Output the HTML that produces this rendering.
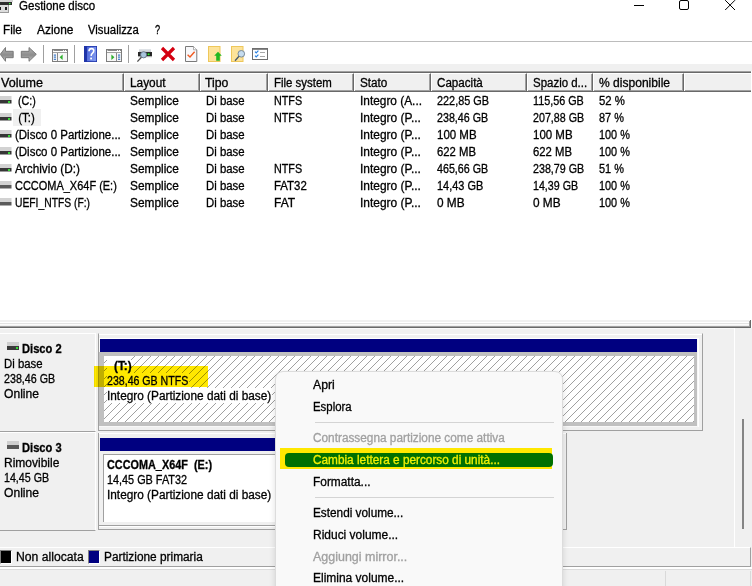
<!DOCTYPE html>
<html><head><meta charset="utf-8">
<style>
html,body{margin:0;padding:0;}
body{width:752px;height:586px;overflow:hidden;position:relative;background:#fff;font-family:"Liberation Sans",sans-serif;}
div{position:absolute;box-sizing:border-box;}
.t{white-space:pre;line-height:1;transform-origin:0 0;-webkit-text-stroke:0.3px currentColor;}
.hl{left:0;width:752px;height:1px;}
.hc{top:73px;height:19px;box-shadow:inset -1px -1px 0 #a0a0a0;background:#f0f0f0;border-top:1px solid #fff;border-left:1px solid #fff;border-bottom:1px solid #696969;border-right:1px solid #696969;}
.sep{width:1px;height:18px;top:45px;background:#a0a0a0;}
svg{position:absolute;overflow:visible;}
</style></head><body>

<!-- title bar -->
<svg style="left:0;top:0" width="14" height="14" viewBox="0 0 14 14">
  <rect x="0" y="0" width="13" height="2" fill="#d4d4d4"/>
  <rect x="0" y="2" width="12" height="3" fill="#2e2e2e"/>
  <rect x="9" y="3" width="1.5" height="1.2" fill="#3cff3c"/>
  <rect x="0" y="5" width="9" height="8" fill="#dcdcdc"/>
  <rect x="8" y="5" width="1" height="8" fill="#9a9a9a"/>
  <rect x="0" y="12" width="9" height="1" fill="#9a9a9a"/>
  <rect x="0" y="7" width="1" height="3" fill="#222"/>
  <rect x="5" y="7" width="2" height="3" fill="#222"/>
</svg>
<div style="left:634px;top:5px;width:10px;height:1px;background:#000"></div>
<div style="left:679px;top:0px;width:10px;height:10px;border:1px solid #000;border-radius:2px"></div>
<svg style="left:725px;top:0" width="11" height="11" viewBox="0 0 11 11"><path d="M0.2 0.2 L10 10 M10 0.2 L0.2 10" stroke="#000" stroke-width="1"/></svg>

<!-- menu line -->
<div class="hl" style="top:41px;background:#bcbcbc"></div>

<!-- toolbar -->
<div class="sep" style="left:43px"></div>
<div class="sep" style="left:74px"></div>
<div class="sep" style="left:128px"></div>
<!-- back/forward arrows -->
<svg style="left:0;top:47px" width="40" height="15" viewBox="0 0 40 15">
  <defs><linearGradient id="ga" x1="0" y1="0" x2="0" y2="1"><stop offset="0" stop-color="#b4b4b4"/><stop offset="0.55" stop-color="#8c8c8c"/><stop offset="1" stop-color="#c4c4c4"/></linearGradient></defs>
  <path d="M0.3 7.3 L5.5 0.5 L5.5 4.3 L13.2 4.3 L13.2 10.7 L5.5 10.7 L5.5 14.3 Z" fill="url(#ga)" stroke="#707070" stroke-width="0.9"/>
  <path d="M21.3 4.3 L29 4.3 L29 0.5 L36.3 7.3 L29 14.3 L29 10.7 L21.3 10.7 Z" fill="url(#ga)" stroke="#707070" stroke-width="0.9"/>
</svg>
<!-- show/hide tree -->
<svg style="left:52px;top:49px" width="16" height="13" viewBox="0 0 16 13">
  <rect x="0.5" y="0.5" width="15" height="12" fill="#f6f6f6" stroke="#7d7d7d"/>
  <rect x="1" y="1" width="14" height="2" fill="#fff"/>
  <line x1="1.5" y1="1.5" x2="11" y2="1.5" stroke="#8a8a8a"/>
  <rect x="12" y="1" width="1" height="1" fill="#8a8a8a"/><rect x="14" y="1" width="1" height="1" fill="#8a8a8a"/>
  <line x1="1" y1="3.5" x2="15" y2="3.5" stroke="#a0a0a0"/>
  <line x1="5.5" y1="4" x2="5.5" y2="12" stroke="#8a8a8a"/>
  <rect x="1.8" y="5.5" width="2.2" height="1.2" fill="#3a78c8"/><rect x="1.8" y="7.5" width="2.2" height="1.2" fill="#3a78c8"/><rect x="1.8" y="9.7" width="2.2" height="1.2" fill="#3a78c8"/>
  <path d="M10.6 5.5 L7.6 8.3 L10.6 11 Z" fill="#2fb02f"/>
</svg>
<!-- help -->
<svg style="left:84px;top:46px" width="13" height="16" viewBox="0 0 13 16">
  <defs><linearGradient id="gh" x1="0" y1="0" x2="1" y2="0.3"><stop offset="0" stop-color="#4a64d8"/><stop offset="1" stop-color="#7d96ee"/></linearGradient></defs>
  <rect x="0" y="0" width="13" height="16" fill="#1f34a8"/>
  <rect x="3" y="0.8" width="9.2" height="14.4" fill="url(#gh)"/>
  <path d="M5 5.2 Q5 2.6 7.4 2.6 Q9.8 2.6 9.8 4.8 Q9.8 6.3 8.3 7.3 Q7.3 8 7.1 9.8" fill="none" stroke="#fff" stroke-width="1.6"/>
  <rect x="6.2" y="11.6" width="1.8" height="1.8" fill="#fff"/>
</svg>
<!-- show/hide action pane -->
<svg style="left:106px;top:49px" width="16" height="13" viewBox="0 0 16 13">
  <rect x="0.5" y="0.5" width="15" height="12" fill="#f6f6f6" stroke="#7d7d7d"/>
  <rect x="1" y="1" width="14" height="2" fill="#fff"/>
  <line x1="1.5" y1="1.5" x2="11" y2="1.5" stroke="#8a8a8a"/>
  <rect x="12" y="1" width="1" height="1" fill="#8a8a8a"/><rect x="14" y="1" width="1" height="1" fill="#8a8a8a"/>
  <line x1="1" y1="3.5" x2="15" y2="3.5" stroke="#a0a0a0"/>
  <line x1="10.5" y1="4" x2="10.5" y2="12" stroke="#8a8a8a"/>
  <rect x="12" y="5.5" width="2.2" height="1.2" fill="#3a78c8"/><rect x="12" y="7.5" width="2.2" height="1.2" fill="#3a78c8"/><rect x="12" y="9.7" width="2.2" height="1.2" fill="#3a78c8"/>
  <path d="M5.4 5.5 L8.4 8.3 L5.4 11 Z" fill="#2fb02f"/>
</svg>
<!-- drive w magnifier -->
<svg style="left:134px;top:44px" width="20" height="20" viewBox="0 0 20 20">
  <defs><linearGradient id="gd" x1="0" y1="0" x2="0" y2="1"><stop offset="0" stop-color="#e4e8ec"/><stop offset="1" stop-color="#c4c8cc"/></linearGradient></defs>
  <rect x="5" y="5" width="12" height="3" fill="url(#gd)"/>
  <rect x="4" y="8" width="14" height="4.5" fill="#2a2a2a"/>
  <rect x="4" y="12.5" width="14" height="0.8" fill="#c8c8c8"/>
  <rect x="12.8" y="9" width="3.6" height="2.6" fill="#111"/>
  <rect x="13.6" y="9.4" width="2" height="1.8" fill="#30f030"/>
  <circle cx="9.6" cy="10.8" r="3.1" fill="#a8c4dc" stroke="#5a6a7a" stroke-width="0.8"/>
  <line x1="7.4" y1="13.2" x2="3.4" y2="17.6" stroke="#505050" stroke-width="1.3"/>
</svg>
<!-- red X -->
<svg style="left:160px;top:46px" width="16" height="16" viewBox="0 0 16 16">
  <path d="M2 2 L14 14 M14 2 L2 14" stroke="#d40010" stroke-width="3.2"/>
</svg>
<!-- doc check -->
<svg style="left:185px;top:46px" width="13" height="16" viewBox="0 0 13 16">
  <path d="M0.5 0.5 L8.5 0.5 L11.8 3.8 L11.8 15.5 L0.5 15.5 Z" fill="#f8f8fa" stroke="#7a7a7a"/>
  <path d="M8.5 0.5 L8.5 3.8 L11.8 3.8" fill="#fff" stroke="#9a9a9a" stroke-width="0.8"/>
  <path d="M2.6 8.8 L5 11 L9.6 5.8" fill="none" stroke="#f05a20" stroke-width="1.4"/>
</svg>
<!-- folder up -->
<svg style="left:208px;top:46px" width="14" height="16" viewBox="0 0 14 16">
  <rect x="0.5" y="0.5" width="11.5" height="15" fill="#fde39a" stroke="#eec75a"/>
  <path d="M10 5.8 L13.8 9.8 L11.8 9.8 L11.8 14.8 L8.2 14.8 L8.2 9.8 L6.2 9.8 Z" fill="#22b822"/>
</svg>
<!-- folder search -->
<svg style="left:231px;top:46px" width="15" height="16" viewBox="0 0 15 16">
  <rect x="0.5" y="0.5" width="11.5" height="15" fill="#fde39a" stroke="#eec75a"/>
  <circle cx="10.3" cy="7.8" r="3.3" fill="#c6dcee" stroke="#7a8a98"/>
  <line x1="8" y1="10.3" x2="4" y2="14.8" stroke="#4a5a6a" stroke-width="1.3"/>
</svg>
<!-- checklist window -->
<svg style="left:252px;top:48px" width="16" height="12" viewBox="0 0 16 12">
  <rect x="0.5" y="0.5" width="15" height="11" fill="#fff" stroke="#6e6e6e"/>
  <rect x="1" y="1" width="14" height="1" fill="#8a8a8a"/>
  <path d="M3 3.6 L4.2 4.8 L6.4 2.6 M3 7.6 L4.2 8.8 L6.4 6.6" fill="none" stroke="#2a80e0" stroke-width="1.2"/>
  <line x1="8" y1="4.5" x2="13" y2="4.5" stroke="#a8a8a8"/>
  <line x1="8" y1="8.5" x2="13" y2="8.5" stroke="#a8a8a8"/>
</svg>

<!-- gray strip -->
<div style="left:0;top:64px;width:752px;height:7px;background:#f0f0f0"></div>
<div class="hl" style="top:71px;width:751px;background:#a0a0a0"></div>
<div class="hl" style="top:72px;width:751px;background:#696969"></div>

<!-- header cells -->
<div class="hc" style="left:-6px;width:130px"></div>
<div class="hc" style="left:124px;width:76px"></div>
<div class="hc" style="left:200px;width:68px"></div>
<div class="hc" style="left:268px;width:86px"></div>
<div class="hc" style="left:354px;width:77px"></div>
<div class="hc" style="left:431px;width:96px"></div>
<div class="hc" style="left:527px;width:66px"></div>
<div class="hc" style="left:593px;width:91px"></div>
<div class="hc" style="left:684px;width:67px;border-right:none;box-shadow:inset 0 -1px 0 #a0a0a0"></div>
<div class="hl" style="top:91px;width:751px;background:#696969"></div>
<div style="left:751px;top:71px;width:1px;height:257px;background:#fff"></div>

<!-- row icons -->
<svg style="left:0;top:96px" width="12" height="8" viewBox="0 0 12 8"><rect x="0" y="0" width="11.5" height="4" fill="#d2d2d2"/><rect x="0" y="4" width="11.5" height="3.5" fill="#363636"/><rect x="8" y="5" width="2" height="2" fill="#3ad83a"/></svg>
<svg style="left:0;top:113px" width="12" height="8" viewBox="0 0 12 8"><rect x="0" y="0" width="11.5" height="4" fill="#d2d2d2"/><rect x="0" y="4" width="11.5" height="3.5" fill="#363636"/><rect x="8" y="5" width="2" height="2" fill="#3ad83a"/></svg>
<svg style="left:0;top:130px" width="12" height="8" viewBox="0 0 12 8"><rect x="0" y="0" width="11.5" height="4" fill="#d2d2d2"/><rect x="0" y="4" width="11.5" height="3.5" fill="#363636"/><rect x="8" y="5" width="2" height="2" fill="#3ad83a"/></svg>
<svg style="left:0;top:147px" width="12" height="8" viewBox="0 0 12 8"><rect x="0" y="0" width="11.5" height="4" fill="#d2d2d2"/><rect x="0" y="4" width="11.5" height="3.5" fill="#363636"/><rect x="8" y="5" width="2" height="2" fill="#3ad83a"/></svg>
<svg style="left:0;top:164px" width="12" height="8" viewBox="0 0 12 8"><rect x="0" y="0" width="11.5" height="4" fill="#d2d2d2"/><rect x="0" y="4" width="11.5" height="3.5" fill="#363636"/><rect x="8" y="5" width="2" height="2" fill="#3ad83a"/></svg>
<svg style="left:0;top:181px" width="12" height="8" viewBox="0 0 12 8"><rect x="0" y="0" width="11.5" height="4" fill="#d2d2d2"/><rect x="0" y="4" width="11.5" height="3.5" fill="#5a5a5a"/></svg>
<svg style="left:0;top:198px" width="12" height="8" viewBox="0 0 12 8"><rect x="0" y="0" width="11.5" height="4" fill="#d2d2d2"/><rect x="0" y="4" width="11.5" height="3.5" fill="#5a5a5a"/></svg>
<div style="left:13px;top:109px;width:28px;height:17px;background:#f0f0f0"></div>

<!-- list bottom edge -->
<div style="left:0;top:320px;width:750px;height:8px;background:#f0f0f0"></div>
<div class="hl" style="top:322px;width:749px;background:#fff"></div>
<div class="hl" style="top:323px;width:749px;background:#e3e3e3"></div>
<div class="hl" style="top:324px;width:749px;background:#fbfbfb"></div>
<div class="hl" style="top:326px;width:750px;background:#a0a0a0"></div>
<div class="hl" style="top:327px;width:751px;background:#696969"></div>
<div style="left:749px;top:321px;width:1px;height:6px;background:#a0a0a0"></div>
<div style="left:750px;top:320px;width:1px;height:8px;background:#696969"></div>

<!-- lower pane -->
<div style="left:0;top:328px;width:752px;height:258px;background:#f0f0f0"></div>
<div class="hl" style="top:328px;width:734px;background:#fafafa"></div>

<!-- scrollbar -->
<div style="left:734px;top:328px;width:1px;height:219px;background:#fff"></div>
<div style="left:742px;top:419px;width:2px;height:110px;background:#858585"></div>

<!-- Disco 2 -->
<div style="left:0;top:333px;width:96px;height:99px;border-top:1px solid #fff;border-right:1px solid #fff;border-bottom:1px solid #a0a0a0"></div>
<div style="left:98px;top:333px;width:605px;height:98px;border-top:1px solid #f0f0f0;border-left:1px solid #a0a0a0;border-right:1px solid #a0a0a0;border-bottom:1px solid #a0a0a0"></div>
<div class="hl" style="left:99px;top:334px;width:603px;background:#fff"></div>
<div style="left:99px;top:338px;width:600px;height:89px;background:#f8f8f8;border-top:1px solid #fff;border-right:1px solid #fff"></div>
<div style="left:100px;top:339px;width:597px;height:13px;background:#000080"></div>
<div style="left:99px;top:352px;width:598px;height:74px;background:#c0c0c0"></div>
<svg style="left:104px;top:356px" width="590" height="66" shape-rendering="crispEdges">
  <defs><pattern id="hatch" width="8" height="8" patternUnits="userSpaceOnUse" x="0" y="0">
    <rect width="8" height="8" fill="#fff"/>
    <rect x="0" y="6" width="1" height="1" fill="#a0a0a0"/><rect x="1" y="5" width="1" height="1" fill="#a0a0a0"/>
    <rect x="2" y="4" width="1" height="1" fill="#a0a0a0"/><rect x="3" y="3" width="1" height="1" fill="#a0a0a0"/>
    <rect x="4" y="2" width="1" height="1" fill="#a0a0a0"/><rect x="5" y="1" width="1" height="1" fill="#a0a0a0"/>
    <rect x="6" y="0" width="1" height="1" fill="#a0a0a0"/><rect x="7" y="7" width="1" height="1" fill="#a0a0a0"/>
  </pattern></defs>
  <rect width="590" height="66" fill="url(#hatch)"/>
</svg>

<div style="left:107px;top:356px;width:24px;height:17px;background:#fff"></div>
<div style="left:107px;top:373px;width:82px;height:15px;background:#fff"></div>
<div style="left:107px;top:388px;width:165px;height:15px;background:#fff"></div>

<!-- Disco 3 -->
<div style="left:0;top:432px;width:96px;height:99px;border-top:1px solid #fff;border-right:1px solid #fff;border-bottom:1px solid #a0a0a0"></div>
<div style="left:98px;top:433px;width:469px;height:97px;border-left:1px solid #a0a0a0;border-right:1px solid #a0a0a0;border-bottom:1px solid #a0a0a0"></div>
<div class="hl" style="left:99px;top:433px;width:467px;background:#fff"></div>
<div style="left:100px;top:438px;width:462px;height:13px;background:#000080"></div>
<div style="left:103px;top:454px;width:458px;height:68px;background:#fff;border-left:1px solid #a0a0a0;border-top:1px solid #a0a0a0"></div>
<div class="hl" style="left:99px;top:525px;width:463px;background:#a0a0a0"></div>
<div class="hl" style="left:99px;top:526px;width:463px;background:#fff"></div>

<!-- disk icons -->
<svg style="left:7px;top:342px" width="13" height="8" viewBox="0 0 13 8">
  <rect x="0" y="0" width="12" height="4" fill="#cfcfcf"/><rect x="0" y="4" width="12" height="4" fill="#3a3a3a"/><rect x="9" y="5" width="2" height="2" fill="#33dd33"/>
</svg>
<svg style="left:7px;top:441px" width="13" height="8" viewBox="0 0 13 8">
  <rect x="0" y="0" width="12" height="4" fill="#cfcfcf"/><rect x="0" y="4" width="12" height="4" fill="#575757"/>
</svg>

<!-- legend -->
<div style="left:-2px;top:547px;width:753px;height:20px;border-top:1px solid #fff;border-bottom:1px solid #a0a0a0;border-right:1px solid #a0a0a0"></div>
<div style="left:0;top:550px;width:12px;height:14px;background:#000;border-top:1px solid #808080;border-left:1px solid #808080;border-right:1px solid #fff;border-bottom:1px solid #fff"></div>
<div style="left:88px;top:550px;width:12px;height:14px;background:#000080;border-top:1px solid #808080;border-left:1px solid #808080;border-right:1px solid #fff;border-bottom:1px solid #fff"></div>

<!-- status bar -->
<div class="hl" style="top:567px;height:2px;background:#fff"></div>
<div class="hl" style="top:569px;background:#dcdcdc"></div>
<div style="left:665px;top:571px;width:1px;height:15px;background:#d9d9d9"></div>
<div style="left:750px;top:571px;width:1px;height:15px;background:#d9d9d9"></div>

<div class="t" style="left:18.50px;top:0.34px;font-size:12px;transform:scaleX(0.9611);color:#000;">Gestione disco</div>
<div class="t" style="left:2.90px;top:24.34px;font-size:12px;transform:scaleX(0.9771);color:#000;">File</div>
<div class="t" style="left:36.80px;top:24.34px;font-size:12px;transform:scaleX(0.9916);color:#000;">Azione</div>
<div class="t" style="left:88.30px;top:24.34px;font-size:12px;transform:scaleX(0.9440);color:#000;">Visualizza</div>
<div class="t" style="left:155.30px;top:24.34px;font-size:12px;transform:scaleX(0.7716);color:#000;">?</div>
<div class="t" style="left:0.70px;top:77.04px;font-size:12px;transform:scaleX(1.0467);color:#000;">Volume</div>
<div class="t" style="left:129.80px;top:77.04px;font-size:12px;transform:scaleX(0.9851);color:#000;">Layout</div>
<div class="t" style="left:205.30px;top:77.04px;font-size:12px;transform:scaleX(1.0216);color:#000;">Tipo</div>
<div class="t" style="left:273.70px;top:77.04px;font-size:12px;transform:scaleX(0.9533);color:#000;">File system</div>
<div class="t" style="left:359.50px;top:77.04px;font-size:12px;transform:scaleX(0.9775);color:#000;">Stato</div>
<div class="t" style="left:436.80px;top:77.04px;font-size:12px;transform:scaleX(0.9673);color:#000;">Capacità</div>
<div class="t" style="left:532.50px;top:77.04px;font-size:12px;transform:scaleX(0.9555);color:#000;">Spazio d...</div>
<div class="t" style="left:599.30px;top:77.04px;font-size:12px;transform:scaleX(1.0044);color:#000;">% disponibile</div>
<div class="t" style="left:14.80px;top:95.34px;font-size:12px;transform:scaleX(0.8899);color:#000;"> (C:)</div>
<div class="t" style="left:129.80px;top:95.34px;font-size:12px;transform:scaleX(0.9887);color:#000;">Semplice</div>
<div class="t" style="left:205.80px;top:95.34px;font-size:12px;transform:scaleX(0.9462);color:#000;">Di base</div>
<div class="t" style="left:274.30px;top:95.34px;font-size:12px;transform:scaleX(0.8965);color:#000;">NTFS</div>
<div class="t" style="left:360.30px;top:95.34px;font-size:12px;transform:scaleX(0.9888);color:#000;">Integro (A...</div>
<div class="t" style="left:437.00px;top:95.34px;font-size:12px;transform:scaleX(0.9063);color:#000;">222,85 GB</div>
<div class="t" style="left:532.90px;top:95.34px;font-size:12px;transform:scaleX(0.8994);color:#000;">115,56 GB</div>
<div class="t" style="left:599.30px;top:95.34px;font-size:12px;transform:scaleX(0.9467);color:#000;">52 %</div>
<div class="t" style="left:14.80px;top:112.34px;font-size:12px;transform:scaleX(0.9538);color:#000;"> (T:)</div>
<div class="t" style="left:129.80px;top:112.34px;font-size:12px;transform:scaleX(0.9887);color:#000;">Semplice</div>
<div class="t" style="left:205.80px;top:112.34px;font-size:12px;transform:scaleX(0.9462);color:#000;">Di base</div>
<div class="t" style="left:274.30px;top:112.34px;font-size:12px;transform:scaleX(0.8965);color:#000;">NTFS</div>
<div class="t" style="left:360.30px;top:112.34px;font-size:12px;transform:scaleX(0.9966);color:#000;">Integro (P...</div>
<div class="t" style="left:437.00px;top:112.34px;font-size:12px;transform:scaleX(0.8908);color:#000;">238,46 GB</div>
<div class="t" style="left:532.90px;top:112.34px;font-size:12px;transform:scaleX(0.8908);color:#000;">207,88 GB</div>
<div class="t" style="left:599.30px;top:112.34px;font-size:12px;transform:scaleX(0.9097);color:#000;">87 %</div>
<div class="t" style="left:14.80px;top:129.34px;font-size:12px;transform:scaleX(0.9556);color:#000;">(Disco 0 Partizione...</div>
<div class="t" style="left:129.80px;top:129.34px;font-size:12px;transform:scaleX(0.9887);color:#000;">Semplice</div>
<div class="t" style="left:205.80px;top:129.34px;font-size:12px;transform:scaleX(0.9462);color:#000;">Di base</div>
<div class="t" style="left:360.30px;top:129.34px;font-size:12px;transform:scaleX(0.9966);color:#000;">Integro (P...</div>
<div class="t" style="left:437.00px;top:129.34px;font-size:12px;transform:scaleX(0.9575);color:#000;">100 MB</div>
<div class="t" style="left:532.90px;top:129.34px;font-size:12px;transform:scaleX(0.9575);color:#000;">100 MB</div>
<div class="t" style="left:599.30px;top:129.34px;font-size:12px;transform:scaleX(0.9076);color:#000;">100 %</div>
<div class="t" style="left:14.80px;top:146.34px;font-size:12px;transform:scaleX(0.9556);color:#000;">(Disco 0 Partizione...</div>
<div class="t" style="left:129.80px;top:146.34px;font-size:12px;transform:scaleX(0.9887);color:#000;">Semplice</div>
<div class="t" style="left:205.80px;top:146.34px;font-size:12px;transform:scaleX(0.9462);color:#000;">Di base</div>
<div class="t" style="left:360.30px;top:146.34px;font-size:12px;transform:scaleX(0.9966);color:#000;">Integro (P...</div>
<div class="t" style="left:437.00px;top:146.34px;font-size:12px;transform:scaleX(0.9432);color:#000;">622 MB</div>
<div class="t" style="left:532.90px;top:146.34px;font-size:12px;transform:scaleX(0.9432);color:#000;">622 MB</div>
<div class="t" style="left:599.30px;top:146.34px;font-size:12px;transform:scaleX(0.9076);color:#000;">100 %</div>
<div class="t" style="left:14.80px;top:163.34px;font-size:12px;transform:scaleX(0.9825);color:#000;">Archivio (D:)</div>
<div class="t" style="left:129.80px;top:163.34px;font-size:12px;transform:scaleX(0.9887);color:#000;">Semplice</div>
<div class="t" style="left:205.80px;top:163.34px;font-size:12px;transform:scaleX(0.9462);color:#000;">Di base</div>
<div class="t" style="left:274.30px;top:163.34px;font-size:12px;transform:scaleX(0.8965);color:#000;">NTFS</div>
<div class="t" style="left:360.30px;top:163.34px;font-size:12px;transform:scaleX(0.9966);color:#000;">Integro (P...</div>
<div class="t" style="left:437.00px;top:163.34px;font-size:12px;transform:scaleX(0.8908);color:#000;">465,66 GB</div>
<div class="t" style="left:532.90px;top:163.34px;font-size:12px;transform:scaleX(0.8908);color:#000;">238,79 GB</div>
<div class="t" style="left:599.30px;top:163.34px;font-size:12px;transform:scaleX(0.9097);color:#000;">51 %</div>
<div class="t" style="left:14.80px;top:180.34px;font-size:12px;transform:scaleX(0.9142);color:#000;">CCCOMA_X64F (E:)</div>
<div class="t" style="left:129.80px;top:180.34px;font-size:12px;transform:scaleX(0.9887);color:#000;">Semplice</div>
<div class="t" style="left:205.80px;top:180.34px;font-size:12px;transform:scaleX(0.9462);color:#000;">Di base</div>
<div class="t" style="left:274.30px;top:180.34px;font-size:12px;transform:scaleX(0.9516);color:#000;">FAT32</div>
<div class="t" style="left:360.30px;top:180.34px;font-size:12px;transform:scaleX(0.9966);color:#000;">Integro (P...</div>
<div class="t" style="left:437.00px;top:180.34px;font-size:12px;transform:scaleX(0.9112);color:#000;">14,43 GB</div>
<div class="t" style="left:532.90px;top:180.34px;font-size:12px;transform:scaleX(0.8896);color:#000;">14,39 GB</div>
<div class="t" style="left:599.30px;top:180.34px;font-size:12px;transform:scaleX(0.9076);color:#000;">100 %</div>
<div class="t" style="left:14.80px;top:197.34px;font-size:12px;transform:scaleX(0.8588);color:#000;">UEFI_NTFS (F:)</div>
<div class="t" style="left:129.80px;top:197.34px;font-size:12px;transform:scaleX(0.9887);color:#000;">Semplice</div>
<div class="t" style="left:205.80px;top:197.34px;font-size:12px;transform:scaleX(0.9462);color:#000;">Di base</div>
<div class="t" style="left:274.30px;top:197.34px;font-size:12px;transform:scaleX(0.9988);color:#000;">FAT</div>
<div class="t" style="left:360.30px;top:197.34px;font-size:12px;transform:scaleX(0.9966);color:#000;">Integro (P...</div>
<div class="t" style="left:437.00px;top:197.34px;font-size:12px;transform:scaleX(0.9852);color:#000;">0 MB</div>
<div class="t" style="left:532.90px;top:197.34px;font-size:12px;transform:scaleX(0.9852);color:#000;">0 MB</div>
<div class="t" style="left:599.30px;top:197.34px;font-size:12px;transform:scaleX(0.9076);color:#000;">100 %</div>
<div class="t" style="left:21.90px;top:342.84px;font-size:12px;transform:scaleX(0.9277);color:#000;font-weight:bold;">Disco 2</div>
<div class="t" style="left:3.60px;top:358.34px;font-size:12px;transform:scaleX(0.9462);color:#000;">Di base</div>
<div class="t" style="left:3.60px;top:373.34px;font-size:12px;transform:scaleX(0.8908);color:#000;">238,46 GB</div>
<div class="t" style="left:3.60px;top:388.34px;font-size:12px;transform:scaleX(1.0074);color:#000;">Online</div>
<div class="t" style="left:21.90px;top:441.84px;font-size:12px;transform:scaleX(0.9277);color:#000;font-weight:bold;">Disco 3</div>
<div class="t" style="left:3.60px;top:457.34px;font-size:12px;transform:scaleX(1.0004);color:#000;">Rimovibile</div>
<div class="t" style="left:3.60px;top:472.34px;font-size:12px;transform:scaleX(0.8896);color:#000;">14,45 GB</div>
<div class="t" style="left:3.60px;top:487.34px;font-size:12px;transform:scaleX(1.0074);color:#000;">Online</div>
<div class="t" style="left:113.50px;top:359.84px;font-size:12px;transform:scaleX(0.9766);color:#000;font-weight:bold;">(T:)</div>
<div class="t" style="left:107.00px;top:374.64px;font-size:12px;transform:scaleX(0.8832);color:#000;">238,46 GB NTFS</div>
<div class="t" style="left:106.80px;top:389.64px;font-size:12px;transform:scaleX(0.9852);color:#000;">Integro (Partizione dati di base)</div>
<div class="t" style="left:106.90px;top:459.34px;font-size:12px;transform:scaleX(0.9051);color:#000;font-weight:bold;">CCCOMA_X64F  (E:)</div>
<div class="t" style="left:106.90px;top:474.04px;font-size:12px;transform:scaleX(0.9044);color:#000;">14,45 GB FAT32</div>
<div class="t" style="left:106.90px;top:488.84px;font-size:12px;transform:scaleX(0.9852);color:#000;">Integro (Partizione dati di base)</div>
<div class="t" style="left:15.80px;top:551.14px;font-size:12px;transform:scaleX(1.0144);color:#000;">Non allocata</div>
<div class="t" style="left:104.10px;top:551.14px;font-size:12px;transform:scaleX(0.9875);color:#000;">Partizione primaria</div>

<!-- highlighter -->
<div style="left:94px;top:366px;width:114px;height:21px;background:#ffe800;mix-blend-mode:multiply"></div>

<!-- context menu -->
<div style="left:275px;top:371px;width:288px;height:240px;background:#f9f9f9;border:1px solid #dcdcdc;border-radius:8px;box-shadow:0 2px 6px rgba(0,0,0,0.13)"></div>
<div class="hl" style="left:315px;top:422px;width:239px;background:#d4d4d4"></div>
<div class="hl" style="left:315px;top:497px;width:239px;background:#d4d4d4"></div>
<div style="left:280px;top:448px;width:272px;height:21px;background:#ffe800"></div>
<div style="left:285px;top:453px;width:268px;height:14px;background:#007000;border-radius:4px"></div>
<div class="t" style="left:312.80px;top:379.34px;font-size:12px;transform:scaleX(1.0216);color:#000;">Apri</div>
<div class="t" style="left:312.80px;top:401.14px;font-size:12px;transform:scaleX(0.9491);color:#000;">Esplora</div>
<div class="t" style="left:312.80px;top:432.14px;font-size:12px;transform:scaleX(0.9847);color:#a0a0a0;">Contrassegna partizione come attiva</div>
<div class="t" style="left:312.80px;top:453.64px;font-size:12px;transform:scaleX(0.9836);color:#f0f000;">Cambia lettera e percorso di unità...</div>
<div class="t" style="left:312.80px;top:476.34px;font-size:12px;transform:scaleX(0.9911);color:#000;">Formatta...</div>
<div class="t" style="left:312.80px;top:506.94px;font-size:12px;transform:scaleX(0.9821);color:#000;">Estendi volume...</div>
<div class="t" style="left:312.80px;top:528.94px;font-size:12px;transform:scaleX(0.9980);color:#000;">Riduci volume...</div>
<div class="t" style="left:312.80px;top:550.84px;font-size:12px;transform:scaleX(1.0397);color:#a0a0a0;">Aggiungi mirror...</div>
<div class="t" style="left:312.80px;top:572.34px;font-size:12px;transform:scaleX(0.9981);color:#000;">Elimina volume...</div>

</body></html>
